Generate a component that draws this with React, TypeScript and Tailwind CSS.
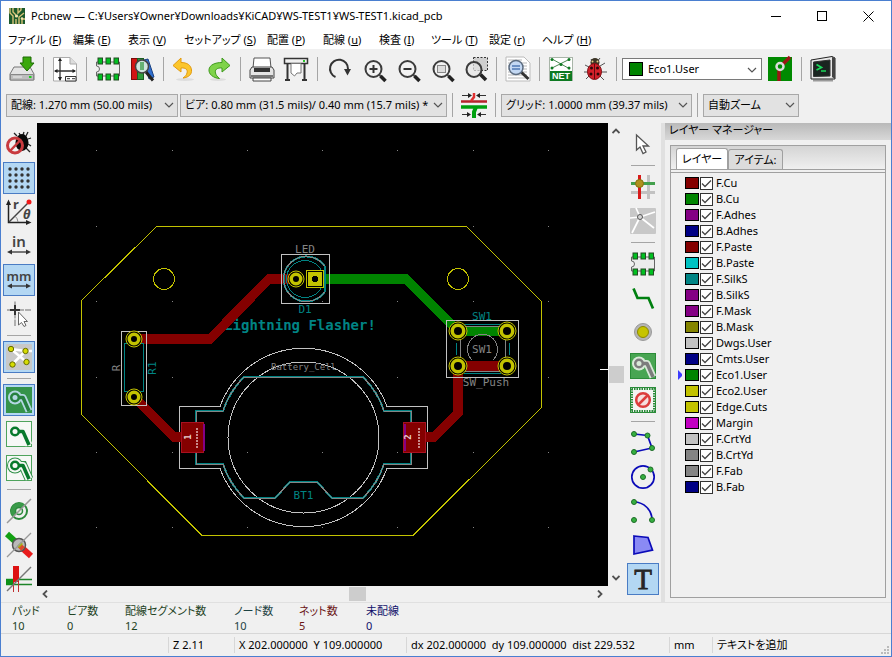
import React, { useState } from 'react';
import clsx from 'clsx';

interface IconProps {
  children: React.ReactNode;
}

function Icon({ children }: IconProps) {
  return (
    <svg width="26" height="26" viewBox="0 0 26 26" fill="none" aria-hidden="true" className="shrink-0 overflow-visible">
      {children}
    </svg>
  );
}

const MAGNIFIER_HANDLE = 'M18.5 18.5 L24 24';

function Magnifier({ children }: { children?: React.ReactNode }) {
  return (
    <Icon>
      <path d="M19 18.5 L21 20.5" stroke="#555" strokeWidth="2" />
      <path d="M20.5 20 L25.5 25" stroke="#222" strokeWidth="3.5" />
      <circle cx="13.5" cy="13" r="8" fill="#f2f2f2" stroke="#3c3c3c" strokeWidth="2" />
      {children}
    </Icon>
  );
}

function FootprintShape() {
  return (
    <>
      <path
        d="M1.5 6 H24.5 V20 H1.5 V16 A3 3 0 0 0 1.5 10 Z"
        fill="#ececec"
        stroke="#666"
        strokeWidth="1"
      />
      {[5, 13, 21].map((x) => (
        <g key={x} fill="#00c020" stroke="#234b23" strokeWidth="1">
          <rect x={x - 2} y="2" width="4.5" height="6" />
          <rect x={x - 2} y="18" width="4.5" height="6" />
        </g>
      ))}
    </>
  );
}

function ZoneTrack({ outer, inner, hole }: { outer: string; inner: string; hole: string }) {
  return (
    <g strokeLinejoin="round">
      <circle cx="9" cy="10.5" r="7" fill={outer} />
      <path d="M9 10.5 H17 L23 24" stroke={outer} strokeWidth="7" />
      <circle cx="9" cy="10.5" r="5" fill={inner} />
      <path d="M9 10.5 H17 L23 24" stroke={inner} strokeWidth="3.5" />
      <circle cx="9" cy="10.5" r="2.5" fill={hole} />
    </g>
  );
}

function ArrowLine({ y }: { y: number }) {
  return (
    <g transform={`translate(0 ${y})`}>
      <path d="M4 0 H22" stroke="#333" strokeWidth="1.3" />
      <path d="M1 0 L6 -2.5 V2.5 Z M25 0 L20 -2.5 V2.5 Z" fill="#333" />
    </g>
  );
}

function Dots({ points }: { points: number[][] }) {
  return (
    <g fill="#35b03f" stroke="#1d6b28">
      {points.map(([x, y]) => (
        <circle key={`${x}-${y}`} cx={x} cy={y} r="2.5" />
      ))}
    </g>
  );
}

const icons = {
  save: (
    <Icon>
      <path d="M5 11 H21 L25 18 V24 H1 V18 Z" fill="#e4e4e4" stroke="#777" />
      <path d="M1.5 18.5 H24.5 V24 H1.5 Z" fill="#bdbdbd" stroke="#888" />
      <path d="M4 21 H13" stroke="#eee" />
      <rect x="20" y="20" width="2.5" height="2" fill="#1ecf1e" />
      <path d="M14 1 H22 V7 H25 L18 15 L11 7 H14 Z" fill="#3aa80c" stroke="#1d6a04" />
    </Icon>
  ),
  page: (
    <Icon>
      <path d="M1.5 1.5 H18 L24.5 8 V25 H1.5 Z" fill="#fff" stroke="#aaa" />
      <path d="M18 1.5 V8 H24.5" fill="#ddd" stroke="#aaa" />
      <path d="M8 3 V24 M3 15 H23" stroke="#333" strokeWidth="1.3" />
      <path d="M8 1.5 L10 5 H6 Z M8 25 L10 21 H6 Z M2 15 L5.5 13 V17 Z M24 15 L20.5 13 V17 Z" fill="#222" />
      <path d="M13.5 20.5 H24 V25 H13.5 Z" fill="#fff" stroke="#333" />
      <path d="M15 22.7 H18 M20 22.7 H23" stroke="#333" />
    </Icon>
  ),
  footprint: (
    <Icon>
      <FootprintShape />
    </Icon>
  ),
  library: (
    <Icon>
      <rect x="2.5" y="2.5" width="6" height="21" fill="#d21414" stroke="#7c0b0b" />
      <rect x="8.5" y="2.5" width="6" height="21" fill="#2f9a3a" stroke="#1b5d22" />
      <path d="M15 4 L19 3 L25 21 L20 23 Z" fill="#2f6fd0" stroke="#1a4180" />
      <path d="M17 16 L24 24.5" stroke="#222" strokeWidth="3" />
      <circle cx="13" cy="10.5" r="6.5" fill="#cfe5df" stroke="#444" strokeWidth="1.5" />
      <path d="M12 6 V14 M14 6 V14" stroke="#44a050" strokeWidth="1.5" />
    </Icon>
  ),
  undo: (
    <Icon>
      <ellipse cx="13" cy="23.5" rx="9" ry="1.5" fill="#ddd" />
      <path
        d="M9 2 L1 9.5 L9 16 V12 C14 11.5 16 14 15 17 C14.5 19 13.5 20 11 22 C17 21.5 20 18 19.5 14 C19 9 15 6.5 9 6.5 Z"
        fill="#fcc62c"
        stroke="#e29a10"
      />
    </Icon>
  ),
  redo: (
    <Icon>
      <ellipse cx="12" cy="23.5" rx="8" ry="1.5" fill="#ddd" />
      <path
        d="M16 2 L24 9.5 L16 16 V12 C11 11.5 8.5 14 9.5 17 C10 19 11 20.5 13.5 22.5 C7 22 2.5 18 3 13.5 C3.5 9 9 6.5 16 6.5 Z"
        fill="#7fd34a"
        stroke="#3f9a1d"
      />
    </Icon>
  ),
  print: (
    <Icon>
      <path d="M5 2 H21 L22 12 H4 Z" fill="#fff" stroke="#555" />
      <path d="M3 11 H23 L25 14 V22 H1 V14 Z" fill="#e4e4e4" stroke="#444" />
      <path d="M5 12 H21 V16 H5 Z" fill="#333" />
      <path d="M2 19 H24 V21 H2 Z" fill="#777" />
      <path d="M4 22 H22 V25 H4 Z" fill="#fff" stroke="#444" />
    </Icon>
  ),
  plot: (
    <Icon>
      <path d="M1.5 2.5 H24.5 V7.5 H1.5 Z" fill="#f0f0f0" stroke="#333" strokeWidth="1.5" />
      <rect x="20" y="4" width="2" height="2" fill="#2ac52a" />
      <path d="M4.5 8 V23 M21.5 8 V23 M2 24 H7 M19 24 H24" stroke="#333" strokeWidth="2" />
      <path d="M8 7.5 H18 V17 H14 L11.5 20 L8 17 Z" fill="#fff" stroke="#777" />
    </Icon>
  ),
  refresh: (
    <Icon>
      <path d="M9.500 21 A9 9 0 1 1 22 13" stroke="#333" strokeWidth="2" />
      <path d="M18 13 H25 L21.500 19.500 Z" fill="#333" />
    </Icon>
  ),
  zoomIn: (
    <Magnifier>
      <path d="M13.5 9 V17 M9.5 13 H17.5" stroke="#333" strokeWidth="2" />
    </Magnifier>
  ),
  zoomOut: (
    <Magnifier>
      <path d="M9.5 13 H17.5" stroke="#333" strokeWidth="2" />
    </Magnifier>
  ),
  zoomFit: (
    <Magnifier>
      <rect x="9.5" y="9.5" width="8" height="7" fill="#ddd" stroke="#888" />
    </Magnifier>
  ),
  zoomArea: (
    <Icon>
      <rect x="11.5" y="1.5" width="14" height="13" fill="#cfcfcf" stroke="#333" strokeDasharray="2 1.5" />
      <circle cx="12" cy="13.5" r="7.5" fill="#e6e6e6" fillOpacity="0.7" stroke="#3c3c3c" strokeWidth="2" />
      <path d={MAGNIFIER_HANDLE} stroke="#222" strokeWidth="3.5" />
    </Icon>
  ),
  findDoc: (
    <Icon>
      <path d="M1 1 H19 L25 7 V25 H1 Z" fill="#fff" stroke="#bbb" />
      <path d="M3 4 H17 M3 7 H22 M3 10 H22 M3 13 H22 M3 16 H22 M3 19 H22 M3 22 H22" stroke="#b5b5b5" strokeWidth="1" />
      <path d="M16 16 L23.5 23" stroke="#333" strokeWidth="3" />
      <circle cx="11" cy="11.5" r="7" fill="#c3d8f3" stroke="#5c6c80" strokeWidth="1.5" />
      <path d="M7 10 H15 M7 13 H15" stroke="#4f78b5" strokeWidth="1.5" />
    </Icon>
  ),
  netlist: (
    <Icon>
      <rect x="1.5" y="1.5" width="23" height="23" fill="#fff" stroke="#a8b5a8" />
      <rect x="2" y="15" width="22" height="10" fill="#0e7a22" />
      <path d="M4 3 L22 13 M22 3 L4 12" stroke="#4c8a55" />
      <g fill="#0e7a22">
        <circle cx="4" cy="3.5" r="1.5" />
        <circle cx="21" cy="3.5" r="1.5" />
        <circle cx="13" cy="8.5" r="1.5" />
        <circle cx="4" cy="12" r="1.5" />
        <circle cx="21" cy="12" r="1.5" />
      </g>
      <text x="13" y="23" textAnchor="middle" fill="#fff" fontSize="9" fontWeight="700" fontFamily="Liberation Sans, sans-serif">
        NET
      </text>
    </Icon>
  ),
  ladybug: (
    <Icon>
      <path d="M3 9 L7 11 M2 16 H6 M4 23 L7 20 M23 7 L18 10 M25 16 H19 M22 24 L18 20 M9 3 L11 6 M18 2 L15 6" stroke="#555" />
      <circle cx="13" cy="6.5" r="4.5" fill="#3b3526" />
      <circle cx="10.5" cy="5.5" r="1" fill="#e8cf8a" />
      <circle cx="15.5" cy="5.5" r="1" fill="#e8cf8a" />
      <ellipse cx="12.5" cy="15.5" rx="7" ry="8" fill="#d3202a" stroke="#7d0c12" />
      <path d="M12.5 8 V23" stroke="#5c0a0e" />
      <g fill="#2b0608">
        <circle cx="9.5" cy="12" r="1.5" />
        <circle cx="15.5" cy="12" r="1.5" />
        <circle cx="9" cy="18" r="1.5" />
        <circle cx="16" cy="18" r="1.5" />
      </g>
    </Icon>
  ),
  layerPair: (
    <Icon>
      <rect x="1" y="1" width="24" height="24" fill="#008a00" />
      <path d="M13 11 L23 1 M12 11 V25" stroke="#9c1515" strokeWidth="3.5" />
      <circle cx="13" cy="10.5" r="3.5" fill="#008a00" stroke="#dcdcdc" strokeWidth="2.5" />
    </Icon>
  ),
  terminal: (
    <Icon>
      <path d="M3 24.5 H23" stroke="#999" strokeWidth="2" />
      <path d="M1 4 L22 0.5 L25 2 V23 H1 Z" fill="#e8e8e8" stroke="#222" />
      <path d="M22 1 L25 2 V23 L22 21 Z" fill="#444" />
      <path d="M3.5 6 L20 4 V20 L3.5 20.5 Z" fill="#1a2420" stroke="#333" />
      <path d="M6.5 8.500 L11.5 11.5 L6.5 14 M11 15 H16" stroke="#1bd85a" strokeWidth="1.7" />
    </Icon>
  ),
  trackWidth: (
    <Icon>
      <path d="M0 9.5 H26" stroke="#b5232b" strokeWidth="2.5" />
      <path d="M0 15 H26" stroke="#00a010" strokeWidth="3.5" />
      <path d="M13 1 V5 L10 9" stroke="#e03030" strokeWidth="2.5" />
      <path d="M13 26 V20 L15 15" stroke="#00a010" strokeWidth="4" />
      <path d="M1 3.5 H9 M17 3.5 H25 M1 22.5 H8 M18 22.5 H25" stroke="#333" />
      <path d="M11 3.5 L7 1 V6 Z M15 3.5 L19 1 V6 Z M10 22.5 L6 20 V25 Z M16 22.5 L20 20 V25 Z" fill="#222" />
    </Icon>
  ),
  drcOff: (
    <Icon>
      <path d="M11 5 L8 2 M20 5 L22 1 M22 8 L25 7 M22 13 L25 15 M20 17 L24 21 M13 2 L15 5 M18 1 L17 4" stroke="#222" strokeWidth="1.3" />
      <ellipse cx="16" cy="11.5" rx="6.5" ry="8.5" fill="#080808" />
      <circle cx="9" cy="14.5" r="7.5" stroke="#c83a3e" strokeWidth="3" />
      <path d="M4 20 L14 9.5" stroke="#c83a3e" strokeWidth="2.5" />
    </Icon>
  ),
  grid: (
    <Icon>
      {[4, 10, 16, 22].map((y) =>
        [4, 10, 16, 22].map((x) => <circle key={`${x}-${y}`} cx={x} cy={y} r="1.7" fill="#333" />)
      )}
    </Icon>
  ),
  polar: (
    <Icon>
      <path d="M2.5 4 V23.5 H22" stroke="#222" strokeWidth="1.5" />
      <path d="M2.5 0.5 L5 6 H0 Z M25.5 23.5 L20 21 V26 Z" fill="#222" />
      <path d="M3 23 L22 4" stroke="#444" strokeWidth="1.5" />
      <path d="M9 17 A9 9 0 0 1 12 23" stroke="#888" />
      <circle cx="23" cy="3" r="2.5" fill="#f01818" />
      <text x="7" y="10" fill="#444" fontSize="13" fontWeight="700" fontFamily="Noto Sans, sans-serif">r</text>
      <text x="17" y="20" fill="#444" fontSize="13" fontWeight="700" fontStyle="italic" fontFamily="Noto Sans, sans-serif">θ</text>
    </Icon>
  ),
  inch: (
    <Icon>
      <text x="13" y="14" textAnchor="middle" fill="#444" fontSize="15" fontWeight="600" fontFamily="Noto Sans, sans-serif">in</text>
      <ArrowLine y={19} />
    </Icon>
  ),
  mm: (
    <Icon>
      <text x="13" y="14" textAnchor="middle" fill="#444" fontSize="13" fontWeight="600" fontFamily="Noto Sans, sans-serif">mm</text>
      <ArrowLine y={19} />
    </Icon>
  ),
  cursorShape: (
    <Icon>
      <path d="M9 0.5 V25 M1 9 H25" stroke="#999" strokeWidth="1.500" strokeDasharray="8 1" />
      <path d="M9 4 V14 M4 9 H14" stroke="#333" strokeWidth="2" />
      <path d="M12.5 11 V24 L15.5 21.5 L18 25.5 L20 24.5 L18 20.5 H21.5 Z" fill="#fff" stroke="#666" />
    </Icon>
  ),
  ratsnest: (
    <Icon>
      <rect width="26" height="26" rx="1" fill="#c8c8c8" />
      <path d="M5 5 L20.5 18 M19.5 7 L6.5 20 M5 5 L19.5 7 H26" stroke="#fff" strokeWidth="2.5" />
      <g fill="#d6dc00" stroke="#666b00">
        <circle cx="5" cy="5" r="2.7" />
        <circle cx="19.5" cy="7" r="2.7" />
        <circle cx="20.5" cy="18" r="2.7" />
        <circle cx="6.5" cy="20.5" r="2.7" />
      </g>
    </Icon>
  ),
  zoneFilled: (
    <Icon>
      <rect width="26" height="26" fill="#35934a" />
      <ZoneTrack outer="#b3d7e3" inner="#26803f" hole="#b3d7e3" />
    </Icon>
  ),
  zoneHidden: (
    <Icon>
      <rect x="0.5" y="0.5" width="25" height="25" fill="#f6f8f6" stroke="#4fa35d" />
      <ZoneTrack outer="#f6f8f6" inner="#07792c" hole="#f6f8f6" />
    </Icon>
  ),
  zoneOutline: (
    <Icon>
      <rect x="0.5" y="0.5" width="25" height="25" fill="#f6f8f6" stroke="#4fa35d" />
      <circle cx="9" cy="10.5" r="8" fill="#2f9148" />
      <path d="M9 10.5 H17 L23 24" stroke="#2f9148" strokeWidth="9" />
      <ZoneTrack outer="#f6f8f6" inner="#07792c" hole="#f6f8f6" />
    </Icon>
  ),
  viaSketch: (
    <Icon>
      <circle cx="13" cy="13" r="8" fill="#f0f0f0" stroke="#2c8a3c" strokeWidth="2" />
      <path d="M19 7 A8.5 8.5 0 0 0 7 19 Z" fill="#3a9a4a" />
      <circle cx="13" cy="13" r="3.5" fill="#e4efe4" stroke="#2c8a3c" strokeWidth="1.5" />
      <path d="M1 25 L25 1" stroke="#999" strokeWidth="1.5" />
    </Icon>
  ),
  trackSketch: (
    <Icon>
      <path d="M1 2 L11 11" stroke="#12a012" strokeWidth="6" />
      <path d="M14 14 L25 24" stroke="#e81c1c" strokeWidth="6" />
      <circle cx="13" cy="13" r="6.5" fill="#b9b9b9" stroke="#555" strokeWidth="1.5" />
      <path d="M13 13 L17 17" stroke="#dd4a2a" strokeWidth="5" />
      <path d="M12 15 L16 11" stroke="#a8b80a" strokeWidth="2.5" />
      <path d="M1 25 L25 1" stroke="#999" strokeWidth="1.3" />
    </Icon>
  ),
  contrast: (
    <Icon>
      <path d="M0 13.5 H26 M0 18.5 H26" stroke="#1c8428" strokeWidth="1.3" />
      <rect x="0" y="13" width="7" height="6" fill="#0f9018" />
      <rect x="7" y="0" width="6" height="16" fill="#dd1212" />
      <path d="M7.5 16 V26 M12.5 16 V26" stroke="#c03030" />
      <path d="M1 25 L25 1" stroke="#777" strokeWidth="1.5" />
    </Icon>
  ),
  pointer: (
    <Icon>
      <path d="M6.5 4 V19 L10 16 L13 22.5 L16 21 L13 15 H18.5 Z" fill="#fff" stroke="#555" strokeWidth="1.3" />
    </Icon>
  ),
  highlightNet: (
    <Icon>
      <path d="M1 18.5 H25 M18.5 1 V25" stroke="#c2c2c2" strokeWidth="3" />
      <path d="M9.5 1 V25" stroke="#d81a1a" strokeWidth="3" />
      <path d="M1 9.5 H25" stroke="#43a04d" strokeWidth="3" />
      <circle cx="9.5" cy="9.5" r="4" fill="#b0901c" stroke="#84700f" />
    </Icon>
  ),
  localRatsnest: (
    <Icon>
      <rect width="26" height="26" rx="1" fill="#c8c8c8" />
      <path d="M10 9 L25 4 M10 9 L0 10 M10 9 L2 25 M10 9 L24 20 M10 9 L6 0" stroke="#fff" strokeWidth="1.7" />
      <circle cx="10" cy="9" r="2.5" fill="#d5d5d5" stroke="#555" />
    </Icon>
  ),
  track: (
    <Icon>
      <path d="M3.5 3.5 L7.5 13 H18.5 L23 23.5" stroke="#008010" strokeWidth="2.7" />
    </Icon>
  ),
  via: (
    <Icon>
      <circle cx="13" cy="13" r="8.500" fill="#b5b5b5" stroke="#999" />
      <circle cx="13" cy="13" r="5.5" fill="#c6c400" stroke="#8c8800" />
    </Icon>
  ),
  addZone: (
    <Icon>
      <rect x="0.5" y="0.5" width="25" height="25" fill="#48a552" stroke="#2c8c38" />
      <ZoneTrack outer="#d9ead9" inner="#7d7d7d" hole="#d9ead9" />
    </Icon>
  ),
  keepout: (
    <Icon>
      <rect x="1.5" y="1.5" width="23" height="23" fill="#f4f4f4" stroke="#2b8c3a" strokeWidth="3" strokeDasharray="1.5 1" />
      <rect x="0.5" y="0.5" width="25" height="25" stroke="#2b8c3a" />
      <circle cx="13" cy="13" r="6.8" fill="#f6dede" stroke="#dc3d3d" strokeWidth="2.5" />
      <path d="M8.5 17.5 L17.5 8.5" stroke="#dc3d3d" strokeWidth="2.5" />
    </Icon>
  ),
  polyline: (
    <Icon>
      <path d="M4 4 L17.5 5.5 L22 18 L4 22" stroke="#0b0bb8" strokeWidth="1.7" />
      <Dots points={[[4, 4], [17.5, 5.5], [22, 18], [4, 22]]} />
    </Icon>
  ),
  circle: (
    <Icon>
      <circle cx="13" cy="13" r="11.2" stroke="#0b0bb8" strokeWidth="1.7" />
      <Dots points={[[13, 13], [20.5, 5.5]]} />
    </Icon>
  ),
  arc: (
    <Icon>
      <path d="M4 4 A18 18 0 0 1 22 22" stroke="#0b0bb8" strokeWidth="1.7" />
      <Dots points={[[4, 4], [4, 22], [22, 22]]} />
    </Icon>
  ),
  polygon: (
    <Icon>
      <path d="M4 4 L18 5.5 L22.5 18 L4 22 Z" fill="#8a8af4" stroke="#0b0bb8" strokeWidth="1.7" />
    </Icon>
  ),
  text: (
    <Icon>
      <text
        x="13"
        y="23"
        textAnchor="middle"
        fill="#262626"
        stroke="#262626"
        strokeWidth="0.8"
        fontSize="29"
        fontFamily="Liberation Serif, serif"
      >
        T
      </text>
    </Icon>
  ),
};

type IconName = keyof typeof icons;

interface Tool {
  icon: IconName;
  label: string;
  active?: boolean;
}

type ToolEntry = Tool | 'sep';

function ToolButton({ icon, label, active }: Tool) {
  return (
    <button
      type="button"
      aria-label={label}
      aria-pressed={active}
      className={clsx(
        'flex size-8 shrink-0 items-center justify-center border',
        active ? 'border-[#4a7cc4] bg-[#b3d7f3]' : 'border-transparent hover:bg-[#dcebf8]'
      )}
    >
      {icons[icon]}
    </button>
  );
}

function VLine() {
  return (
    <div className="flex h-6 w-[7px] shrink-0 justify-center">
      <div className="w-px bg-[#a5a5a5]" />
    </div>
  );
}

function SideToolbar({ tools, label }: { tools: ToolEntry[]; label: string }) {
  return (
    <div role="toolbar" aria-label={label} className="flex w-9 shrink-0 flex-col items-center gap-0.5 pt-[5px] pb-[7px]">
      {tools.map((tool, i) =>
        tool === 'sep' ? (
          <div key={i} className="flex h-[7px] w-6 items-center">
            <div className="h-px w-full bg-[#a5a5a5]" />
          </div>
        ) : (
          <ToolButton key={i} {...tool} />
        )
      )}
    </div>
  );
}

function Chevron() {
  return (
    <svg width="10" height="6" viewBox="0 0 10 6" fill="none" className="pointer-events-none absolute top-2 right-1" aria-hidden="true">
      <path d="M1 1 L5 5 L9 1" stroke="#555" strokeWidth="1.2" />
    </svg>
  );
}

function ComboBox({ label, value, width }: { label: string; value: string; width: string }) {
  return (
    <div className={clsx('relative shrink-0', width)}>
      <select
        aria-label={label}
        className="h-[23px] w-full appearance-none border border-[#a8a8a8] bg-[#e2e2e2] pr-4 pl-1 leading-5"
        defaultValue={value}
      >
        <option>{value}</option>
      </select>
      <Chevron />
    </div>
  );
}

const mainTools: ToolEntry[] = [
  { icon: 'save', label: '保存' },
  'sep',
  { icon: 'page', label: 'ページ設定' },
  'sep',
  { icon: 'footprint', label: 'フットプリントエディター' },
  { icon: 'library', label: 'ライブラリ' },
  'sep',
  { icon: 'undo', label: '元に戻す' },
  { icon: 'redo', label: 'やり直し' },
  'sep',
  { icon: 'print', label: '印刷' },
  { icon: 'plot', label: 'プロット' },
  'sep',
  { icon: 'refresh', label: '再描画' },
  { icon: 'zoomIn', label: 'ズームイン' },
  { icon: 'zoomOut', label: 'ズームアウト' },
  { icon: 'zoomFit', label: '全体表示' },
  { icon: 'zoomArea', label: '範囲ズーム' },
  'sep',
  { icon: 'findDoc', label: '検索' },
  'sep',
  { icon: 'netlist', label: 'ネットリスト' },
  { icon: 'ladybug', label: 'DRC' },
  'sep',
];

const leftTools: ToolEntry[] = [
  { icon: 'drcOff', label: 'DRC オフ' },
  { icon: 'grid', label: 'グリッド表示', active: true },
  { icon: 'polar', label: '極座標' },
  { icon: 'inch', label: 'インチ' },
  { icon: 'mm', label: 'ミリメートル', active: true },
  { icon: 'cursorShape', label: 'カーソル形状' },
  'sep',
  { icon: 'ratsnest', label: 'ラッツネスト', active: true },
  'sep',
  { icon: 'zoneFilled', label: 'ゾーン塗りつぶし', active: true },
  { icon: 'zoneHidden', label: 'ゾーン非表示' },
  { icon: 'zoneOutline', label: 'ゾーン外形' },
  'sep',
  { icon: 'viaSketch', label: 'ビア スケッチ' },
  { icon: 'trackSketch', label: '配線 スケッチ' },
  { icon: 'contrast', label: 'ハイコントラスト' },
];

const rightTools: ToolEntry[] = [
  { icon: 'pointer', label: '選択' },
  'sep',
  { icon: 'highlightNet', label: 'ネット ハイライト' },
  { icon: 'localRatsnest', label: 'ローカル ラッツネスト' },
  'sep',
  { icon: 'footprint', label: 'フットプリント追加' },
  { icon: 'track', label: '配線' },
  { icon: 'via', label: 'ビア' },
  { icon: 'addZone', label: 'ゾーン追加' },
  { icon: 'keepout', label: 'キープアウト' },
  'sep',
  { icon: 'polyline', label: 'ライン' },
  { icon: 'circle', label: '円' },
  { icon: 'arc', label: '円弧' },
  { icon: 'polygon', label: 'ポリゴン' },
  { icon: 'text', label: 'テキスト', active: true },
];

const menus = [
  { name: 'ファイル', mnemonic: 'F', width: 'w-[65px]' },
  { name: '編集', mnemonic: 'E', width: 'w-[55px]' },
  { name: '表示', mnemonic: 'V', width: 'w-14' },
  { name: 'セットアップ', mnemonic: 'S', width: 'w-[83px]' },
  { name: '配置', mnemonic: 'P', width: 'w-14' },
  { name: '配線', mnemonic: 'u', width: 'w-14' },
  { name: '検査', mnemonic: 'I', width: 'w-[52px]' },
  { name: 'ツール', mnemonic: 'T', width: 'w-[58px]' },
  { name: '設定', mnemonic: 'r', width: 'w-[53px]' },
  { name: 'ヘルプ', mnemonic: 'H', width: 'w-14' },
];

const layers = [
  { name: 'F.Cu', color: 'bg-[#840000]' },
  { name: 'B.Cu', color: 'bg-[#008400]' },
  { name: 'F.Adhes', color: 'bg-[#840084]' },
  { name: 'B.Adhes', color: 'bg-[#000084]' },
  { name: 'F.Paste', color: 'bg-[#840000]' },
  { name: 'B.Paste', color: 'bg-[#00c2c2]' },
  { name: 'F.SilkS', color: 'bg-[#008484]' },
  { name: 'B.SilkS', color: 'bg-[#840084]' },
  { name: 'F.Mask', color: 'bg-[#840084]' },
  { name: 'B.Mask', color: 'bg-[#848400]' },
  { name: 'Dwgs.User', color: 'bg-[#c2c2c2]' },
  { name: 'Cmts.User', color: 'bg-[#000084]' },
  { name: 'Eco1.User', color: 'bg-[#008400]' },
  { name: 'Eco2.User', color: 'bg-[#c2c200]' },
  { name: 'Edge.Cuts', color: 'bg-[#c2c200]' },
  { name: 'Margin', color: 'bg-[#c200c2]' },
  { name: 'F.CrtYd', color: 'bg-[#c2c2c2]' },
  { name: 'B.CrtYd', color: 'bg-[#848484]' },
  { name: 'F.Fab', color: 'bg-[#848484]' },
  { name: 'B.Fab', color: 'bg-[#000084]' },
];

const boardInfo = [
  { label: 'パッド', value: '10', style: 'w-[55px] text-[#1d421d]' },
  { label: 'ビア数', value: '0', style: 'w-[58px] text-[#1d421d]' },
  { label: '配線セグメント数', value: '12', style: 'w-[109px] text-[#1d421d]' },
  { label: 'ノード数', value: '10', style: 'w-[65px] text-[#1d4242]' },
  { label: 'ネット数', value: '5', style: 'w-[67px] text-[#6b1515]' },
  { label: '未配線', value: '0', style: 'w-16 text-[#10106b]' },
];

function TitleBar() {
  return (
    <header className="flex h-[30px] items-center bg-white pl-2">
      <svg width="16" height="16" viewBox="0 0 16 16" fill="none" aria-hidden="true" className="mr-1.5 shrink-0">
        <rect width="16" height="16" fill="#1c5a2c" />
        <path d="M1 0 V5 L4 8 V16 M4 0 V4 L7 7 M10 16 V9 L15 5 M7 16 V11 M13 16 V11 H16 M9 0 V5 L12 2 V0" stroke="#d9c378" strokeWidth="1.4" />
        <circle cx="7.5" cy="8" r="1.6" fill="#f4e6b0" />
        <circle cx="13" cy="10.5" r="1.3" fill="#f4e6b0" />
      </svg>
      <h1 className="flex-1 whitespace-nowrap">Pcbnew — C:¥Users¥Owner¥Downloads¥KiCAD¥WS-TEST1¥WS-TEST1.kicad_pcb</h1>
      <button type="button" aria-label="最小化" className="flex h-full w-[46px] items-center justify-center">
        <svg width="11" height="11" viewBox="0 0 11 11"><path d="M0 5.5 H10" stroke="#000" /></svg>
      </button>
      <button type="button" aria-label="最大化" className="flex h-full w-[46px] items-center justify-center">
        <svg width="11" height="11" viewBox="0 0 11 11"><rect x="0.5" y="0.5" width="9" height="9" fill="none" stroke="#000" /></svg>
      </button>
      <button type="button" aria-label="閉じる" className="flex h-full w-[46px] items-center justify-center">
        <svg width="11" height="11" viewBox="0 0 11 11"><path d="M0.5 0.5 L10.5 10.5 M10.5 0.5 L0.5 10.5" stroke="#000" /></svg>
      </button>
    </header>
  );
}

function MenuBar() {
  return (
    <nav className="flex h-[18px] bg-white pl-[7px]">
      {menus.map((m) => (
        <button key={m.name} type="button" className={clsx('flex shrink-0 items-center whitespace-nowrap', m.width)}>
          {m.name}&nbsp;(<span className="underline">{m.mnemonic}</span>)
        </button>
      ))}
    </nav>
  );
}

function Toolbars() {
  return (
    <div className="pt-1 pl-[5px]">
      <div role="toolbar" aria-label="メイン" className="flex h-8 items-center gap-0.5">
        {mainTools.map((tool, i) => (tool === 'sep' ? <VLine key={i} /> : <ToolButton key={i} {...tool} />))}
        <div className="relative flex h-[22px] w-[140px] items-center border border-[#7a7a7a] bg-white pl-1.5">
          <span className="size-3.5 shrink-0 border border-black bg-[#008400]" />
          <select aria-label="作業レイヤー" defaultValue="Eco1.User" className="w-full appearance-none pl-[5px] leading-5">
            {layers.map((l) => (
              <option key={l.name}>{l.name}</option>
            ))}
          </select>
          <Chevron />
        </div>
        <ToolButton icon="layerPair" label="レイヤーペア" />
        <VLine />
        <ToolButton icon="terminal" label="スクリプトコンソール" />
      </div>
      <div role="toolbar" aria-label="補助" className="mt-0.5 flex h-9 items-center gap-0.5">
        <ComboBox label="配線幅" value="配線: 1.270 mm (50.00 mils)" width="w-[172px]" />
        <ComboBox label="ビアサイズ" value="ビア: 0.80 mm (31.5 mils)/ 0.40 mm (15.7 mils) *" width="w-[267px]" />
        <VLine />
        <ToolButton icon="trackWidth" label="配線幅の自動設定" />
        <VLine />
        <ComboBox label="グリッド" value="グリッド: 1.0000 mm (39.37 mils)" width="w-[191px]" />
        <VLine />
        <ComboBox label="ズーム" value="自動ズーム" width="w-24" />
      </div>
    </div>
  );
}

function RoundPad({ x, y, r = 6.5, hole = 3 }: { x: number; y: number; r?: number; hole?: number }) {
  return (
    <g shapeRendering="auto">
      <circle cx={x} cy={y} r={r + 1.5} fill="#000" stroke="#c2c200" />
      <circle cx={x} cy={y} r={(r + hole) / 2} fill="#000" stroke="#c2c200" strokeWidth={r - hole} />
    </g>
  );
}

const SILK_BATTERY =
  'M196 422 V411 H223 A85 85 0 0 1 244 377 H363 A85 85 0 0 1 384 411 H411 V422 M196 453 V464 H223 A85 85 0 0 0 244 498 H275 L290 482 H317 L332 498 H363 A85 85 0 0 0 384 464 H411 V453';

const GRID_X = [96, 172, 247, 322, 397, 473, 548];
const GRID_Y = [150, 226, 301, 377, 452, 527];

function BoardCanvas() {
  return (
    <svg
      viewBox="37 123 571 463"
      preserveAspectRatio="xMidYMid slice"
      className="min-h-0 w-full flex-1 bg-black"
      role="img"
      aria-label="基板"
      fill="none"
      fontFamily="DejaVu Sans Mono, monospace"
      fontSize="11"
      textAnchor="middle"
      shapeRendering="crispEdges"
    >
      {GRID_Y.map((y) => GRID_X.map((x) => <rect key={`${x}-${y}`} x={x} y={y} width="1" height="1" fill="#848484" />))}
      <path d="M600 369.5 H608" stroke="#fff" />

      <path d="M156.5 226.5 H466.5 L541 301 V408 L413 535.5 H202 L81 414 V301 Z" stroke="#c2c200" />
      <circle cx="164" cy="279" r="10.5" stroke="#c2c200" />
      <circle cx="458" cy="279" r="10.5" stroke="#c2c200" />

      <text x="300" y="330" fontSize="14" fontWeight="700" fill="#008484">Lightning Flasher!</text>

      {/* BT1 outline */}
      <path
        d="M179.5 406.5 H220 A89 89 0 0 1 387 406.5 H427.5 V468.5 H387 A89 89 0 0 1 220 468.5 H179.5 Z"
        stroke="#c2c2c2"
      />
      <circle cx="303.5" cy="437.5" r="75.5" stroke="#c2c2c2" />
      <path d={SILK_BATTERY} stroke="#008484" strokeWidth="2" />
      <path d={SILK_BATTERY} stroke="#848484" strokeWidth="1" />
      <text x="303.5" y="370" fontSize="9" fill="#848484">Battery_Cell</text>
      <text x="303.5" y="499" fill="#008484">BT1</text>

      {/* copper */}
      <path d="M296 279 H269 L210 339 H134 M134 397 L174 437 H192" stroke="#840000" strokeWidth="9.5" />
      <path d="M458 331 H507 M315 279 H406 L458 331" stroke="#008400" strokeWidth="9.5" />
      <path d="M507 366 H458 V413 L434 437 H412" stroke="#840000" strokeWidth="9.5" />

      {/* BT1 pads */}
      <rect x="181.5" y="422.5" width="22" height="30" fill="#840000" stroke="#a81020" />
      <path d="M203.5 424 V451" stroke="#840084" strokeWidth="2" />
      <rect x="403.5" y="422.5" width="22" height="30" fill="#840000" stroke="#a81020" />
      <path d="M404.5 424 V451" stroke="#840084" strokeWidth="2" />
      <path d="M197 428 V449 M419 428 V449" stroke="#c98a8a" strokeWidth="2" strokeDasharray="2 1" />
      <text transform="translate(191 437) rotate(-90)" fontSize="9" fontWeight="700" fill="#e8d0d0">1</text>
      <text transform="translate(411 437) rotate(-90)" fontSize="9" fontWeight="700" fill="#e8d0d0">2</text>

      {/* R1 */}
      <rect x="121.5" y="331.5" width="25" height="74" stroke="#c2c2c2" />
      <rect x="124.5" y="343.5" width="19" height="48" stroke="#008484" />
      <RoundPad x={134} y={339} />
      <RoundPad x={134} y={397} />
      <text transform="translate(156 368) rotate(-90)" fill="#008484">R1</text>
      <text transform="translate(120 368) rotate(-90)" fill="#848484">R</text>

      {/* D1 */}
      <rect x="281.5" y="254.5" width="48" height="49" stroke="#c2c2c2" />
      <path d="M324.5 266 A22.5 22.5 0 1 0 324.5 292 Z" stroke="#008484" strokeWidth="2" />
      <path d="M324.5 266 A22.5 22.5 0 1 0 324.5 292" stroke="#848484" />
      <circle cx="305" cy="279" r="18.5" stroke="#008484" />
      <RoundPad x={296} y={279} />
      <rect x="306.5" y="270.5" width="17" height="17" fill="#000" stroke="#c2c200" />
      <rect x="308" y="272" width="14" height="14" fill="#c2c200" />
      <circle cx="315" cy="279" r="3" fill="#000" />
      <text x="305" y="253" fill="#848484">LED</text>
      <text x="305" y="313" fill="#008484">D1</text>

      {/* SW1 */}
      <rect x="446.5" y="320.5" width="72" height="57" stroke="#c2c2c2" />
      <path d="M464 326.5 H501 M464 371.5 H501 M460.5 340 V358 M505.5 340 V358" stroke="#848484" />
      <path d="M464 324.5 H501 M464 373.5 H501 M456.5 343 V355 M509.5 343 V355" stroke="#008484" />
      <path d="M472 360 A15 15 0 1 1 493 360" stroke="#848484" />
      <RoundPad x={458} y={331} r={7.5} hole={4} />
      <RoundPad x={507} y={331} r={7.5} hole={4} />
      <RoundPad x={458} y={366} r={7.5} hole={4} />
      <RoundPad x={507} y={366} r={7.5} hole={4} />
      <text x="482" y="353" fill="#848484">SW1</text>
      <text x="482" y="320" fill="#008484">SW1</text>
      <text x="486" y="386" fill="#848484">SW_Push</text>
    </svg>
  );
}

function ScrollArrow({ d, label }: { d: string; label: string }) {
  return (
    <button type="button" aria-label={label} className="flex size-4 shrink-0 items-center justify-center">
      <svg width="8" height="8" viewBox="0 0 8 8" fill="none">
        <path d={d} stroke="#505050" strokeWidth="1.8" />
      </svg>
    </button>
  );
}

function Workspace() {
  return (
    <div className="flex min-w-0 flex-1">
      <div className="flex min-w-0 flex-1 flex-col">
        <BoardCanvas />
        <div className="flex h-4 shrink-0">
          <ScrollArrow d="M6 0.5 L2.5 4 L6 7.5" label="左へ" />
          <div className="flex-[296]" />
          <div className="my-px w-[17px] bg-[#cdcdcd]" />
          <div className="flex-[226]" />
          <ScrollArrow d="M2 0.5 L5.5 4 L2 7.5" label="右へ" />
        </div>
      </div>
      <div className="mb-4 flex w-[17px] shrink-0 flex-col">
        <ScrollArrow d="M0.5 6 L4 2.5 L7.5 6" label="上へ" />
        <div className="flex-[227]" />
        <div className="mx-px h-[17px] bg-[#cdcdcd]" />
        <div className="flex-[187]" />
        <ScrollArrow d="M0.5 2 L4 5.5 L7.5 2" label="下へ" />
      </div>
    </div>
  );
}

function LayerManager() {
  const [tab, setTab] = useState('layers');
  const [visible, setVisible] = useState(() => layers.map(() => true));

  const toggle = (index: number) => {
    setVisible((prev) => prev.map((v, i) => (i === index ? !v : v)));
  };

  return (
    <aside className="flex w-[226px] shrink-0 flex-col">
      <h2 className="h-[17px] shrink-0 bg-linear-to-b from-[#b9b9b9] to-[#d8d8d8] pl-1 leading-[14px]">
        レイヤー マネージャー
      </h2>
      <div className="mx-[5px] mt-[5px] mb-1 flex flex-1 flex-col border border-[#a0a0a0]">
        <div role="tablist" className="flex h-6 items-end border-b border-[#a0a0a0] bg-linear-to-b from-[#d4d4d4] to-[#f0f0f0] pl-[5px]">
          {[
            { id: 'layers', text: 'レイヤー', width: 'w-[52px]' },
            { id: 'items', text: 'アイテム:', width: 'w-[55px]' },
          ].map((t) => (
            <button
              key={t.id}
              type="button"
              role="tab"
              aria-selected={tab === t.id}
              onClick={() => setTab(t.id)}
              className={clsx(
                'rounded-t-[3px] border border-b-0 border-[#a0a0a0] leading-4 whitespace-nowrap',
                t.width,
                tab === t.id ? 'h-[21px] bg-white' : 'h-5 bg-[#dcdcdc]'
              )}
            >
              {t.text}
            </button>
          ))}
        </div>
        <ul className="mt-0.5 border-t border-[#a0a0a0] pt-0.5 pl-1.5">
          {layers.map((layer, i) => (
            <li key={layer.name} className="flex h-4 items-center">
              <svg width="6" height="10" viewBox="0 0 6 10" className={clsx('mr-0.5', layer.name !== 'Eco1.User' && 'invisible')}>
                <path d="M1 0 L5 4 V6 L1 10 Z" fill="#3c3cff" />
              </svg>
              <span className={clsx('mr-px h-3 w-3.5 border border-black', layer.color)} />
              <label className="flex items-center gap-[3px]">
                <span className="grid size-[13px] place-items-center">
                  <input
                    type="checkbox"
                    checked={visible[i]}
                    onChange={() => toggle(i)}
                    className="peer col-start-1 row-start-1 size-[13px] appearance-none border border-[#333] bg-white"
                  />
                  <svg
                    width="11"
                    height="11"
                    viewBox="0 0 11 11"
                    fill="none"
                    className="pointer-events-none invisible col-start-1 row-start-1 peer-checked:visible"
                  >
                    <path d="M1 5.5 L4 8.5 L10 2.5" stroke="#444" strokeWidth="1.3" />
                  </svg>
                </span>
                {layer.name}
              </label>
            </li>
          ))}
        </ul>
      </div>
    </aside>
  );
}

function BoardInfo() {
  return (
    <dl className="flex border-t border-[#e0e0e0] pl-[11px]">
      {boardInfo.map((item) => (
        <div key={item.label} className={clsx('shrink-0 leading-[15px] whitespace-nowrap', item.style)}>
          <dt>{item.label}</dt>
          <dd>{item.value}</dd>
        </div>
      ))}
    </dl>
  );
}

function StatusBar() {
  return (
    <footer className="flex h-[23px] items-center border-t border-[#d7d7d7] whitespace-pre *:border-[#d7d7d7]">
      <div className="w-[167px]" />
      <div className="w-[66px] border-l pl-1">Z 2.11</div>
      <div className="w-[172px] border-l pl-1">X 202.000000  Y 109.000000</div>
      <div className="w-[263px] border-l pl-1">dx 202.000000  dy 109.000000  dist 229.532</div>
      <div className="w-[43px] border-l pl-1">mm</div>
      <div className="flex-1 border-l pl-1">テキストを追加</div>
      <svg width="12" height="12" viewBox="0 0 12 12" aria-hidden="true" className="self-end">
        <path d="M8 2h2v2H8z M5 5h2v2H5z M8 5h2v2H8z M2 8h2v2H2z M5 8h2v2H5z M8 8h2v2H8z" fill="#bbb" />
      </svg>
    </footer>
  );
}

export default function App() {
  return (
    <div className="flex min-h-screen w-full flex-col overflow-hidden border border-[#4a7fd0] bg-[#f0f0f0] font-['Noto_Sans','Noto_Sans_CJK_JP',sans-serif] text-[11px] leading-4 text-black [font-feature-settings:'palt']">
      <TitleBar />
      <MenuBar />
      <Toolbars />
      <main className="flex flex-1">
        <SideToolbar tools={leftTools} label="表示" />
        <Workspace />
        <SideToolbar tools={rightTools} label="配置" />
        <div className="w-1 shrink-0 bg-[#e0e0e0]" />
        <LayerManager />
      </main>
      <BoardInfo />
      <StatusBar />
    </div>
  );
}
